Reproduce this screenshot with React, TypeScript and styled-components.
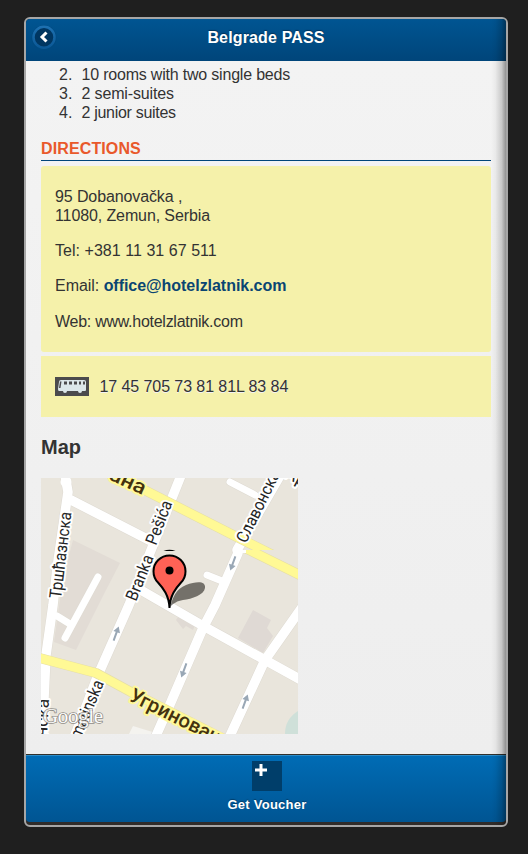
import React from "react";
import styled, { createGlobalStyle } from "styled-components";

const GlobalStyle = createGlobalStyle`
  * { box-sizing: border-box; }
  body { margin: 0; background: #1f1f1f; font-family: "Liberation Sans", Arial, sans-serif; }
`;

const Stage = styled.div`
  height: 854px;
  padding: 17px 20px 27px 24px;
`;

const Phone = styled.main`
  position: relative;
  width: 484px;
  height: 810px;
  border: 2px solid #a6a6a6;
  border-radius: 6px;
  background: #302c2a;
  overflow: hidden;
  display: flex;
  flex-direction: column;
`;

const EdgeShade = styled.div`
  position: absolute;
  top: 0;
  right: 0;
  bottom: 0;
  width: 15px;
  pointer-events: none;
  background: linear-gradient(to left, rgba(0, 0, 0, 0.4), rgba(0, 0, 0, 0.17) 30%, rgba(0, 0, 0, 0.04) 70%, transparent);
`;

const Header = styled.header`
  flex: none;
  height: 42px;
  padding: 0 6px 5px 5px;
  display: grid;
  grid-template-columns: 26px 1fr 25px;
  align-items: center;
  background: linear-gradient(#005592, #00457a);
`;

const Title = styled.h1`
  margin: 0;
  text-align: center;
  font-size: 16px;
  line-height: 20px;
  letter-spacing: 0.15px;
  color: #fff;
  text-shadow: 0 -1px 1px #00335a;
`;

const BackButton = styled.button`
  width: 26px;
  height: 26px;
  padding: 0;
  border: 0;
  background: none;
  display: block;
`;

const Content = styled.section`
  flex: none;
  height: 693px;
  padding: 4px 15px 0;
  color: #333;
  font-size: 16px;
  line-height: 19px;
  text-shadow: 0 1px 0 #f3f3f3;
  background: linear-gradient(#f3f3f3, #eee);
`;

const RoomList = styled.ol`
  margin: 0;
  padding: 0 0 0 18px;
  list-style: none;
  counter-reset: room 1;
`;

const Room = styled.li<{ $spacing: number }>`
  display: flex;
  counter-increment: room;
  letter-spacing: ${(p) => p.$spacing}px;

  &::before {
    content: counter(room) ".";
    width: 22.500px;
    letter-spacing: 0;
  }
`;

const SectionTitle = styled.h2`
  margin: 16px 0 5px;
  height: 23px;
  border-bottom: 1px solid #00457a;
  color: #e9592b;
  font-size: 16px;
  line-height: 21px;
  letter-spacing: 0.12px;
`;

const Card = styled.div<{ $height: number; $round?: boolean }>`
  height: ${(p) => p.$height}px;
  margin-bottom: 4px;
  padding: 0 14px;
  border-radius: ${(p) => (p.$round ? 3 : 0)}px;
  background: #f5f1aa;
  text-shadow: none;
`;

const AddressCard = styled(Card)`
  padding-top: 21px;
`;

const BusCard = styled(Card)`
  display: flex;
  align-items: center;
  gap: 10.500px;
  letter-spacing: -0.08px;
  text-shadow: 0 1px 0 #f3f3f3;
`;

const Line = styled.p<{ $spacing?: number }>`
  margin: 0 0 16.2px;
  letter-spacing: ${(p) => p.$spacing ?? 0}px;
`;

const Mail = styled.a`
  color: #0a4572;
  font-weight: bold;
`;

const MapTitle = styled.h3`
  margin: 18px 0 19px;
  font-size: 20px;
  line-height: 24px;
`;

const MapView = styled.svg`
  display: block;
  text-shadow: none;
`;

const Footer = styled.footer`
  flex: none;
  height: 68px;
  border-top: 1px solid #30302c;
  box-shadow: inset 0 1px 0 #2d8cc8;
  background: linear-gradient(#006cb5, #005593);
  color: #fff;
  display: flex;
  flex-direction: column;
  align-items: center;
  padding: 6px 0 0 2px;
  border-radius: 0 0 4px 4px;
`;

const PlusTile = styled.span`
  width: 30px;
  height: 30px;
  padding: 3px;
  background: #003e6a;
  display: block;
  line-height: 0;
`;

const FooterLabel = styled.span`
  margin-top: 5px;
  font-size: 13px;
  font-weight: bold;
  line-height: 17px;
  letter-spacing: 0.25px;
  text-shadow: 0 -1px 1px #003e6a;
`;

const BackIcon = () => (
  <svg width="26" height="26" viewBox="0 0 26 26">
    <defs>
      <linearGradient id="ring" x2="0" y2="1">
        <stop stopColor="#1d70b0" />
        <stop offset="1" stopColor="#0b5896" />
      </linearGradient>
    </defs>
    <circle cx="13" cy="12.800" r="12.500" fill="#004a80" />
    <circle cx="13" cy="12.300" r="10.500" fill="#003661" stroke="url(#ring)" strokeWidth="2.500" />
    <path d="M15.500 7.500 11 12l4.500 4.500" fill="none" stroke="#fff" strokeWidth="3" />
  </svg>
);

const BusIcon = () => (
  <svg width="34" height="19" viewBox="0 0 34 19">
    <path fill="#4b4b4d" d="M0 0h34v19H0z" />
    <path fill="#dce7ea" d="M6 3h23q2 0 2 2v8q0 1-1 1h-3a2 2 0 0 1-4 0H12a2 2 0 0 1-4 0H4q-1 0-1-2l1-7q0-2 2-2z" />
    <path fill="#4b4b4d" d="M5 4.500h1.500L5.500 11H4zM9 4.500h3v3H9zM14 4.500h3v3h-3zM19 4.500h3v3h-3zM24 4.500h2v3h-2zM28 4.500h2v3h-2z" />
  </svg>
);

const pinPath = "M128.500 130C128 117 122 110 117 104.500A16 16 0 1 1 140 104.500C135 110 129 117 128.500 130z";

const roads = [
  "M24-3 27 14 16 90 12 127 5 177 3 220-2 260",
  "M30 22 108 62",
  "M141-5 88 127 57 197 33 260",
  "M240-4 196 72 197 75 174 127 162 150 130 224 114 260",
  "M98 111 164 149 224 182 262 203",
  "M262 128 224 182 188 260",
  "M189 4 214 17",
  "M166 97 181 103",
  "M57 99 24 160M16 138 29 146",
];

const oneWay: Array<[number, number, number]> = [
  [192, 85, 200],
  [75, 156, 20],
  [143, 192, 200],
  [204, 224, 20],
];

interface StreetName {
  x: number;
  y: number;
  angle: number;
  text: string;
  size: number;
  length: number;
  halo?: string;
}

const streets: StreetName[] = [
  { x: 20, y: 121, angle: -83, text: "Тршћазнска", size: 17, length: 87 },
  { x: 95, y: 124, angle: -68, text: "Branka", size: 17, length: 48 },
  { x: 115, y: 68, angle: -69, text: "Pešića", size: 17, length: 46 },
  { x: 205, y: 66, angle: -64, text: "Славонска", size: 17, length: 78 },
  { x: 39, y: 262, angle: -67, text: "matinska", size: 17, length: 62 },
  { x: 6, y: 259, angle: -87, text: "нска", size: 17, length: 38 },
  { x: 87, y: 222, angle: 26.500, text: "Угриновачка", size: 20, length: 121, halo: "#fff89a" },
  { x: 67, y: 1, angle: 25, text: "ана", size: 20, length: 38, halo: "#fff89a" },
  { x: 243, y: -1, angle: 28, text: "Арх", size: 17, length: 30 },
];

const CityMap = () => (
  <MapView width="257" height="256" viewBox="0 0 257 256">
    <defs>
      <clipPath id="upper"><path d="M0 0h257v72H0z" /></clipPath>
      <clipPath id="lower"><path d="M0 72h257v184H0z" /></clipPath>
    </defs>
    <path fill="#e9e5dc" d="M0 0h257v256H0z" />
    <path fill="#e2dcd5" d="m32 62 47 23-14 27-30 60-22-8 9-64z" />
    <path fill="#dfd9d4" d="m212 132 18 10-4 8 6 8-10 17-25-15z" />
    <path fill="#e0dad4" d="m135 142 4-6 16 9-3 7-7-4-3 3z" />
    <path fill="#f4f3ef" d="m88 256 4-8 26 8z" />
    <path fill="#cfe0d9" d="M244 256q0-15 13-23v23z" />
    <g fill="none" strokeLinecap="round" strokeLinejoin="round">
      {roads.map((d, i) => <path key={d} d={d} stroke="#dedad2" strokeWidth={i > 5 ? 8 : 10.500} />)}
      <circle cx="25" cy="4" r="5.500" fill="#fff" />
      {roads.map((d, i) => <path key={d} d={d} stroke="#fff" strokeWidth={i > 5 ? 7 : 9.500} />)}
      <g stroke="#e6dfa8" strokeWidth="10">
        <path clipPath="url(#upper)" d="M68-6 194 58 250 86" />
        <path clipPath="url(#lower)" d="M190 63 265 100" />
        <path d="M-5 179 55 195 90 214 185 262" />
      </g>
      <g stroke="#fff995" strokeWidth="8.800">
        <path clipPath="url(#upper)" d="M68-6 194 58 250 86" />
        <path clipPath="url(#lower)" d="M190 63 265 100" />
        <path d="M-5 179 55 195 90 214 185 262" />
      </g>
    </g>
    <path d="M192 72h13v3h-13z" fill="#fff" />
    {oneWay.map(([x, y, a]) => (
      <path key={`${x}-${y}`} transform={`translate(${x} ${y}) rotate(${a})`} fill="#99a7b5" d="M0-8 3.500-2H1v9h-2v-9h-2.500z" />
    ))}
    {streets.map((s) => (
      <text
        key={s.text}
        transform={`translate(${s.x} ${s.y}) rotate(${s.angle})`}
        fontFamily='Roboto, "Noto Sans", sans-serif'
        fontSize={s.size}
        fontWeight={s.halo ? 500 : 400}
        textLength={s.length}
        lengthAdjust="spacingAndGlyphs"
        fill={s.halo ? "#44320f" : "#252525"}
        stroke={s.halo ?? "#fff"}
        strokeWidth="4"
        strokeLinejoin="round"
        paintOrder="stroke"
      >
        {s.text}
      </text>
    ))}
    <path fill="#35322d" opacity=".65" d="M129 129c3-10 6-18 16-22 11-4 20-4 19 3-1 7-13 11-22 12-6 1-9 3-13 7z" />
    <path d="M122.500 73q6-2.500 12 0z" />
    <path d={pinPath} fill="#fe6256" stroke="#000" strokeWidth="2" />
    <circle cx="128.500" cy="92.500" r="4" />
    <text
      x="2"
      y="245"
      fontFamily='"Liberation Serif", serif'
      fontSize="21"
      textLength="60"
      fill="#fff"
      stroke="#8a867f"
      strokeWidth="1.600"
      paintOrder="stroke"
      opacity=".9"
    >
      Google
    </text>
  </MapView>
);

export default function App() {
  return (
    <>
      <GlobalStyle />
      <Stage>
        <Phone>
          <Header>
            <BackButton aria-label="Back"><BackIcon /></BackButton>
            <Title>Belgrade PASS</Title>
          </Header>
          <Content>
            <RoomList start={2}>
              <Room $spacing={-0.2}>10 rooms with two single beds</Room>
              <Room $spacing={-0.14}>2 semi-suites</Room>
              <Room $spacing={-0.3}>2 junior suites</Room>
            </RoomList>
            <SectionTitle>DIRECTIONS</SectionTitle>
            <AddressCard $height={186} $round>
              <Line $spacing={-0.11}>95 Dobanovačka ,<br />11080, Zemun, Serbia</Line>
              <Line $spacing={0.04}>Tel: +381 11 31 67 511</Line>
              <Line $spacing={-0.04}>Email: <Mail>office@hotelzlatnik.com</Mail></Line>
              <Line $spacing={-0.27}>Web: www.hotelzlatnik.com</Line>
            </AddressCard>
            <BusCard $height={61}>
              <BusIcon />
              <span>17 45 705 73 81 81L 83 84</span>
            </BusCard>
            <MapTitle>Map</MapTitle>
            <CityMap />
          </Content>
          <Footer>
            <PlusTile>
              <svg width="12" height="12" viewBox="0 0 12 12">
                <path fill="#fff" d="M4.500 0h3v4.500H12v3H7.500V12h-3V7.500H0v-3h4.500z" />
              </svg>
            </PlusTile>
            <FooterLabel>Get Voucher</FooterLabel>
          </Footer>
          <EdgeShade />
        </Phone>
      </Stage>
    </>
  );
}
